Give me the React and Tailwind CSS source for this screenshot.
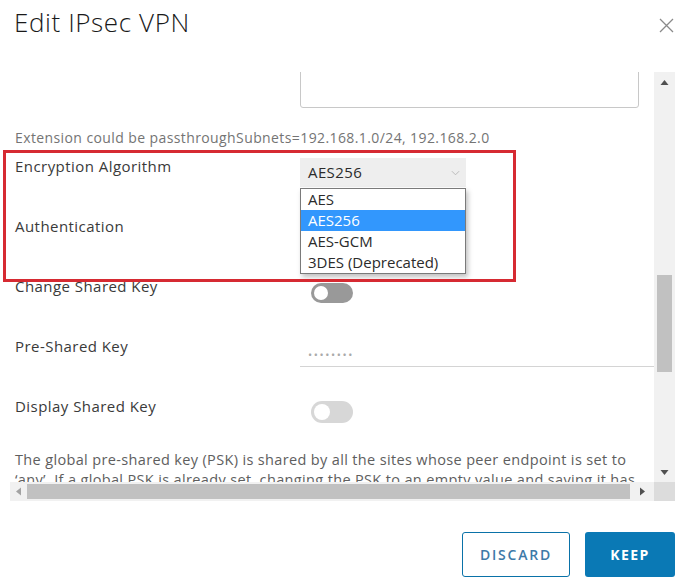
export default function App() {
  const options = ["AES", "AES256", "AES-GCM", "3DES (Deprecated)"];
  const label = "w-[285px] -mt-[1px] text-[15px] leading-[18px] tracking-[0.45px] text-[#3a3a3a]";

  return (
    <div
      className="relative w-[691px] h-[585px] bg-white flex flex-col overflow-hidden"
      style={{ fontFamily: "'Open Sans', Lato, sans-serif" }}
    >
      {/* Header */}
      <div className="relative h-[72px] shrink-0">
        <h1 className="pl-[14px] pt-[5px] text-[26px] leading-[34px] tracking-[0.6px] font-light text-[#1a1a1a]">
          Edit IPsec VPN
        </h1>
        <button className="absolute left-[659px] top-[18px] w-[15px] h-[15px] text-[#8a8a8a]">
          <svg viewBox="0 0 15 15" className="w-[15px] h-[15px]">
            <path d="M1 1 L14 14 M14 1 L1 14" stroke="currentColor" strokeWidth="1.3" fill="none" />
          </svg>
        </button>
      </div>

      {/* Scrollable body */}
      <div className="ml-[10px] grid grid-cols-[644px_21px] grid-rows-[410px_19px]">
        <div className="overflow-hidden">
          <div className="-mt-[20px] pl-[5px] w-[720px]">
            <div className="ml-[285px] w-[339px] h-[56px] border border-[#c8c8c8] rounded-[3px]" />
            <p className="mt-[21px] text-[14px] leading-[18px] tracking-[0.4px] text-[#747474]">
              Extension could be passthroughSubnets=192.168.1.0/24, 192.168.2.0
            </p>

            <div className="mt-[11px]">
              <div className="flex h-[60px]">
                <div className={label}>Encryption Algorithm</div>
                <div className="w-[166px] h-[29px] bg-[#eeeeee] flex items-center justify-between pl-[8px] pr-[6px]">
                  <span className="text-[15px] tracking-[0.4px] text-[#2b2b2b]">AES256</span>
                  <svg viewBox="0 0 10 6" className="w-[9px] h-[6px]">
                    <path d="M1 1 L5 5 L9 1" stroke="#b5b5b5" strokeWidth="1" fill="none" />
                  </svg>
                </div>
              </div>

              <div className="flex h-[60px]">
                <div className={label}>Authentication</div>
              </div>

              <div className="flex h-[60px]">
                <div className={label}>Change Shared Key</div>
                <div className="ml-[11px] mt-[5px] w-[42px] h-[20px] rounded-full bg-[#999999] p-[3px]">
                  <div className="w-[14px] h-[14px] rounded-full bg-white" />
                </div>
              </div>

              <div className="flex h-[60px]">
                <div className={label}>Pre-Shared Key</div>
                <div className="w-[354px] h-[29px] border-b border-[#d4d4d4] pl-[8px] flex items-end pb-[6px]">
                  <span className="text-[11px] leading-[10px] tracking-[1.6px] text-[#aaaaaa]">••••••••</span>
                </div>
              </div>

              <div className="flex h-[60px]">
                <div className={label}>Display Shared Key</div>
                <div className="ml-[11px] mt-[3px] w-[42px] h-[22px] rounded-full bg-[#d7d7d7] p-[3px]">
                  <div className="w-[16px] h-[16px] rounded-full bg-white" />
                </div>
              </div>
            </div>

            <p className="-mt-[8px] text-[14.5px] leading-[20px] tracking-[0.35px] text-[#5e5e5e] whitespace-nowrap">
              The global pre-shared key (PSK) is shared by all the sites whose peer endpoint is set to
              <br />
              ‘any’. If a global PSK is already set, changing the PSK to an empty value and saving it has
              <br />
              no effect on the existing setting.
            </p>
          </div>
        </div>

        {/* Vertical scrollbar */}
        <div className="bg-[#f1f1f1] flex flex-col items-center">
          <div className="h-[20px] flex items-center justify-center">
            <svg viewBox="0 0 8 5" className="w-[9px] h-[5px]">
              <path d="M0 5 L4 0 L8 5 Z" fill="#505050" />
            </svg>
          </div>
          <div className="mt-[183px] w-[15px] h-[97px] bg-[#c1c1c1]" />
          <div className="mt-auto h-[20px] flex items-center justify-center">
            <svg viewBox="0 0 8 5" className="w-[9px] h-[5px]">
              <path d="M0 0 L4 5 L8 0 Z" fill="#505050" />
            </svg>
          </div>
        </div>

        {/* Horizontal scrollbar */}
        <div className="bg-[#f1f1f1] flex items-center">
          <div className="w-[17px] flex items-center justify-center">
            <svg viewBox="0 0 5 8" className="w-[5px] h-[9px]">
              <path d="M5 0 L0 4 L5 8 Z" fill="#a3a3a3" />
            </svg>
          </div>
          <div className="w-[603px] h-[15px] bg-[#c1c1c1]" />
          <div className="flex-1 flex items-center justify-center">
            <svg viewBox="0 0 5 8" className="w-[5px] h-[9px]">
              <path d="M0 0 L5 4 L0 8 Z" fill="#505050" />
            </svg>
          </div>
        </div>
        <div className="bg-[#dcdcdc]" />
      </div>

      {/* Footer */}
      <div className="flex justify-end gap-[15px] pr-[16px] pt-[31px]">
        <button className="w-[108px] h-[45px] border border-[#0a72a8] rounded-[3px] text-[14px] font-semibold tracking-[1.8px] text-[#3d7aa8]">
          DISCARD
        </button>
        <button className="w-[90px] h-[45px] bg-[#0a79b5] rounded-[3px] text-[14px] font-bold tracking-[1.4px] text-white">
          KEEP
        </button>
      </div>

      {/* Open dropdown list */}
      <div className="absolute left-[300px] top-[188px] w-[166px] border border-[#7a7a7a] bg-white shadow-[2px_3px_5px_rgba(0,0,0,0.25)]">
        {options.map((o) => (
          <div
            key={o}
            className={
              o === "AES256"
                ? "h-[21px] px-[7px] text-[15px] leading-[21px] bg-[#3297fd] text-white"
                : "h-[21px] px-[7px] text-[15px] leading-[21px] text-[#2b2b2b]"
            }
          >
            {o}
          </div>
        ))}
      </div>

      {/* Annotation box */}
      <div className="absolute left-[3px] top-[150px] w-[513px] h-[132px] border-[3px] border-[#d62a32]" />
    </div>
  );
}
